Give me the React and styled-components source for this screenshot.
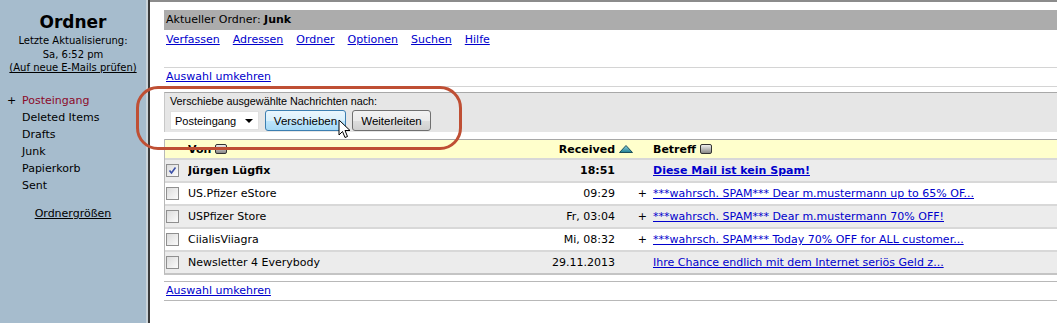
import React from 'react'
import styled, { createGlobalStyle } from 'styled-components'

const GlobalStyle = createGlobalStyle`
  html, body { margin: 0; padding: 0; background: #fff; overflow: hidden; }
  body { font-family: "DejaVu Sans", Verdana, sans-serif; font-size: 11px; color: #000; }
`;

const Page = styled.div`
  display: flex;
  height: 323px;
  position: relative;
`;

const Sidebar = styled.div`
  width: 146px;
  background: #a6bccd;
  display: flex;
  flex-direction: column;
  padding-top: 13px;
  box-sizing: border-box;
`;

const Divider = styled.div`
  width: 2px;
  background: #c9d3da;
  border-right: 2px solid #3a3a3a;
`;

const SideTitle = styled.div`
  text-align: center;
  font-weight: bold;
  font-size: 17px;
  line-height: 19px;
`;

const SideInfo = styled.div`
  text-align: center;
  font-size: 10px;
  line-height: 13.5px;
  margin-top: 2px;
`;

const SideLink = styled.a`
  color: #000;
  text-decoration: underline;
  font-size: ${(p) => p.size || 10}px;
`;

const FolderList = styled.ul`
  list-style: none;
  margin: 17px 0 0 0;
  padding: 0;
`;

const Folder = styled.li`
  display: flex;
  line-height: 17px;
  font-size: 11px;
  color: ${(p) => (p.active ? '#8c0a2a' : '#000')};
`;

const FolderMark = styled.span`
  width: 22px;
  padding-left: 7px;
  box-sizing: border-box;
  color: #000;
`;

const SizesRow = styled.div`
  text-align: center;
  margin-top: 13px;
  font-size: 11px;
`;

const Main = styled.div`
  flex: 1;
  border-top: 2px solid #8c8c8c;
  padding: 8px 0 0 14px;
  box-sizing: border-box;
`;

const TitleBar = styled.div`
  background: #acacac;
  height: 20px;
  line-height: 20px;
  padding-left: 2px;
  font-size: 11px;
`;

const Nav = styled.div`
  display: flex;
  gap: 13px;
  padding: 3px 0 0 2px;
  height: 37px;
  box-sizing: border-box;
`;

const Link = styled.a`
  color: #0000cc;
  text-decoration: underline;
  cursor: pointer;
  font-weight: ${(p) => (p.bold ? 'bold' : 'normal')};
`;

const InvertRow = styled.div`
  border-top: 1px solid ${(p) => p.line || '#d4d4d4'};
  border-bottom: 1px solid ${(p) => p.line || '#d4d4d4'};
  height: 18px;
  line-height: 18px;
  padding-left: 2px;
  margin-top: ${(p) => p.top || 0}px;
`;

const MoveBox = styled.div`
  margin-top: 5px;
  background: #e6e6e6;
  border-top: 1px solid #a8a8a8;
  border-left: 1px solid #c8c8c8;
  padding: 2px 0 1px 5px;
  font-family: "Liberation Sans", Arial, sans-serif;
`;

const MoveLabel = styled.div`
  font-size: 10.8px;
  line-height: 13px;
`;

const MoveControls = styled.div`
  display: flex;
  gap: 6px;
  align-items: center;
  margin-top: 2px;
`;

const Select = styled.div`
  width: 89px;
  height: 19px;
  background: #fff;
  border: 1px solid #e0e0e0;
  display: flex;
  align-items: center;
  justify-content: space-between;
  padding: 0 5px 0 4px;
  box-sizing: border-box;
  font-size: 11px;
`;

const Caret = styled.span`
  width: 0;
  height: 0;
  border-left: 4px solid transparent;
  border-right: 4px solid transparent;
  border-top: 4px solid #000;
`;

const Button = styled.button`
  height: 21px;
  width: ${(p) => p.w}px;
  padding: 0;
  border-radius: 3px;
  font-family: "Liberation Sans", Arial, sans-serif;
  font-size: 11.5px;
  color: #000;
  border: 1px solid ${(p) => (p.hover ? '#3c7fb1' : '#707070')};
  background: ${(p) =>
    p.hover
      ? 'linear-gradient(#eaf6fd 0%, #d9f0fc 50%, #bee6fd 51%, #a7d9f5 100%)'
      : 'linear-gradient(#f2f2f2 0%, #ebebeb 50%, #dddddd 51%, #cfcfcf 100%)'};
`;

const Table = styled.div`
  margin-top: 7px;
  border-left: 1px solid #b8b8b8;
  border-bottom: 2px solid #c4c4c4;
`;

const Row = styled.div`
  display: grid;
  grid-template-columns: 23px 307px 120px 38px 1fr;
  align-items: center;
  height: ${(p) => (p.head ? 18 : 21)}px;
  border-top: ${(p) => (p.head ? '1px solid #a8a8a8' : '2px solid #d8d8d8')};
  background: ${(p) => (p.head ? '#ffffcc' : p.shade ? '#ececec' : '#ffffff')};
  font-weight: ${(p) => (p.bold || p.head ? 'bold' : 'normal')};
  white-space: nowrap;
`;

const Cell = styled.div`
  display: flex;
  align-items: center;
  justify-content: ${(p) => p.align || 'flex-start'};
  gap: 4px;
  padding-right: ${(p) => p.pr || 0}px;
  overflow: hidden;
`;

const Check = styled.span`
  width: 11px;
  height: 11px;
  margin-left: 1px;
  border: 1px solid #8f8f8f;
  background: linear-gradient(135deg, #dcdcdc, #fbfbfb);
  display: flex;
  align-items: center;
  justify-content: center;
`;

const SortBox = styled.span`
  width: 10px;
  height: 8px;
  border: 1px solid #333;
  border-radius: 2px;
  background: linear-gradient(#eee, #888);
`;

const Ring = styled.div`
  position: absolute;
  left: 136px;
  top: 86px;
  width: 326px;
  height: 64px;
  border: 3px solid #bf4f34;
  border-radius: 22px;
  box-sizing: border-box;
  pointer-events: none;
`;

const Pointer = styled.svg`
  position: absolute;
  left: 338px;
  top: 119px;
`;

const mails = [
  { from: 'Jürgen Lügfix', time: '18:51', subject: 'Diese Mail ist kein Spam!', checked: true, bold: true },
  { from: 'US.Pfizer eStore', time: '09:29', plus: true, subject: '***wahrsch. SPAM*** Dear m.mustermann up to 65% OF...' },
  { from: 'USPfizer Store', time: 'Fr, 03:04', plus: true, subject: '***wahrsch. SPAM*** Dear m.mustermann 70% OFF!' },
  { from: 'CiialisViiagra', time: 'Mi, 08:32', plus: true, subject: '***wahrsch. SPAM*** Today 70% OFF for ALL customer...' },
  { from: 'Newsletter 4 Everybody', time: '29.11.2013', subject: 'Ihre Chance endlich mit dem Internet seriös Geld z...' },
];

const folders = ['Posteingang', 'Deleted Items', 'Drafts', 'Junk', 'Papierkorb', 'Sent'];

function App() {
  return (
    <Page>
      <GlobalStyle />
      <Sidebar>
        <SideTitle>Ordner</SideTitle>
        <SideInfo>
          Letzte Aktualisierung:<br />
          Sa, 6:52 pm<br />
          <SideLink>(Auf neue E-Mails prüfen)</SideLink>
        </SideInfo>
        <FolderList>
          {folders.map((f, i) => (
            <Folder key={f} active={i === 0}>
              <FolderMark>{i === 0 ? '+' : ''}</FolderMark>
              {f}
            </Folder>
          ))}
        </FolderList>
        <SizesRow>
          <SideLink size={11}>Ordnergrößen</SideLink>
        </SizesRow>
      </Sidebar>
      <Divider />
      <Main>
        <TitleBar>
          Aktueller Ordner: <b>Junk</b>
        </TitleBar>
        <Nav>
          {['Verfassen', 'Adressen', 'Ordner', 'Optionen', 'Suchen', 'Hilfe'].map((n) => (
            <Link key={n}>{n}</Link>
          ))}
        </Nav>
        <InvertRow>
          <Link>Auswahl umkehren</Link>
        </InvertRow>
        <MoveBox>
          <MoveLabel>Verschiebe ausgewählte Nachrichten nach:</MoveLabel>
          <MoveControls>
            <Select>
              Posteingang <Caret />
            </Select>
            <Button hover w={81}>Verschieben</Button>
            <Button w={79}>Weiterleiten</Button>
          </MoveControls>
        </MoveBox>
        <Table>
          <Row head>
            <Cell />
            <Cell>
              Von <SortBox />
            </Cell>
            <Cell align="flex-end">Received</Cell>
            <Cell>
              <svg width="14" height="8" viewBox="0 0 14 8" style={{ marginLeft: 4 }}>
                <defs>
                  <linearGradient id="tri" x1="0" y1="0" x2="0" y2="1">
                    <stop offset="0" stopColor="#8fd3e0" />
                    <stop offset="1" stopColor="#1f7f92" />
                  </linearGradient>
                </defs>
                <path d="M7 0.5 L13.5 7.5 L0.5 7.5 Z" fill="url(#tri)" stroke="#1c4f5a" strokeWidth="1" />
              </svg>
            </Cell>
            <Cell>
              Betreff <SortBox />
            </Cell>
          </Row>
          {mails.map((m, i) => (
            <Row key={m.from} shade={i % 2 === 0} bold={m.bold}>
              <Cell>
                <Check>
                  {m.checked && (
                    <svg width="9" height="9" viewBox="0 0 9 9">
                      <path d="M1.5 4.5 L3.5 7 L7.5 1.5" fill="none" stroke="#3a4fa8" strokeWidth="1.6" />
                    </svg>
                  )}
                </Check>
              </Cell>
              <Cell>{m.from}</Cell>
              <Cell align="flex-end">{m.time}</Cell>
              <Cell align="flex-end" pr={6}>{m.plus ? '+' : ''}</Cell>
              <Cell>
                <Link bold={m.bold}>{m.subject}</Link>
              </Cell>
            </Row>
          ))}
        </Table>
        <InvertRow top={6} line="#b8b8b8">
          <Link>Auswahl umkehren</Link>
        </InvertRow>
      </Main>
      <Ring />
      <Pointer width="14" height="20" viewBox="0 0 14 20">
        <path d="M1 1 L1 16 L4.5 12.5 L7 18.5 L9.5 17.5 L7 11.5 L12 11.5 Z" fill="#fff" stroke="#000" strokeWidth="1" strokeLinejoin="round" />
      </Pointer>
    </Page>
  )
}

export default App
